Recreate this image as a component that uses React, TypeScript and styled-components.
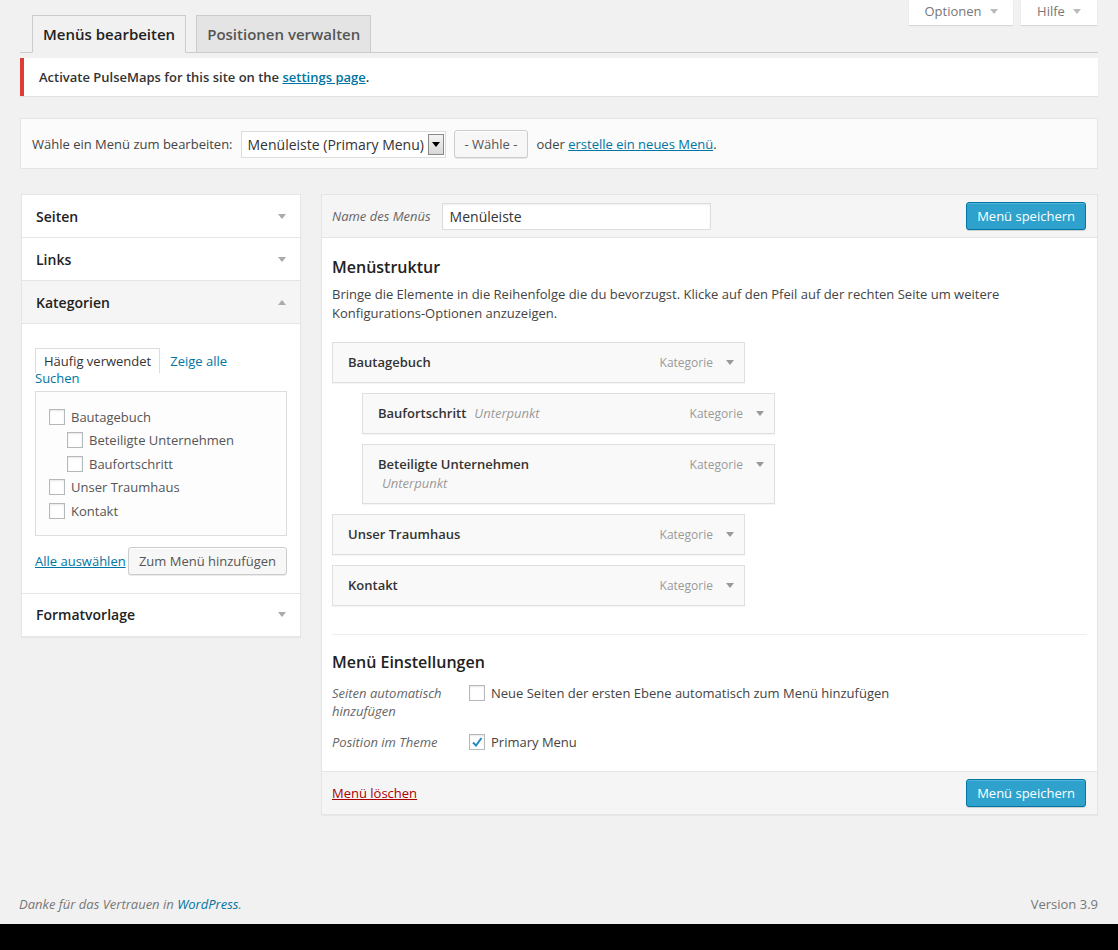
import styled, { createGlobalStyle } from "styled-components";

const GlobalStyle = createGlobalStyle`
  html, body {
    margin: 0;
    padding: 0;
    background: #f1f1f1;
  }
  body {
    font-family: "Open Sans", "Noto Sans", sans-serif;
    font-size: 13px;
    color: #444;
  }
  * {
    box-sizing: border-box;
  }
`;

const Page = styled.div`
  min-height: 950px;
  display: flex;
  flex-direction: column;
`;

const Wrap = styled.div`
  flex: 1;
  padding: 0 20px;
`;

const HeaderRow = styled.div`
  display: flex;
  align-items: flex-start;
  justify-content: space-between;
  height: 53px;
  border-bottom: 1px solid #ccc;
`;

const TabList = styled.div`
  display: flex;
  gap: 10px;
  padding-left: 12px;
  margin-top: 15px;
`;

const Tab = styled.div<{ $active?: boolean }>`
  height: 38px;
  padding: 0 10px;
  display: flex;
  align-items: center;
  font-size: 15px;
  font-weight: 600;
  border: 1px solid #ccc;
  border-bottom-color: ${(p) => (p.$active ? "#f1f1f1" : "#ccc")};
  background: ${(p) => (p.$active ? "#f1f1f1" : "#e4e4e4")};
  color: ${(p) => (p.$active ? "#222" : "#555")};
`;

const ScreenMeta = styled.div`
  display: flex;
  gap: 8px;
  margin-right: 1px;
`;

const MetaButton = styled.div<{ $width: number }>`
  width: ${(p) => p.$width}px;
  height: 25px;
  padding-bottom: 3px;
  display: flex;
  align-items: center;
  justify-content: center;
  gap: 8px;
  background: #fff;
  color: #777;
  font-size: 13px;
  box-shadow: 0 1px 1px rgba(0, 0, 0, 0.1);
`;

const Notice = styled.div`
  margin-top: 5px;
  background: #fff;
  border-left: 4px solid #dd3d36;
  box-shadow: 0 1px 1px rgba(0, 0, 0, 0.06);
  padding: 9px 15px;
  line-height: 20px;
  font-weight: 600;
  color: #333;
`;

const Link = styled.a`
  color: #0074a2;
  text-decoration: underline;
`;

const DangerLink = styled.a`
  color: #a00;
  text-decoration: underline;
`;

const ManageBox = styled.div`
  margin-top: 22px;
  background: #fbfbfb;
  border: 1px solid #e5e5e5;
  padding: 11px 11px 10px;
  display: flex;
  align-items: center;
  gap: 8px;
`;

const FakeSelect = styled.div`
  width: 205px;
  height: 27px;
  display: flex;
  align-items: center;
  justify-content: space-between;
  background: #fff;
  border: 1px solid #ddd;
  padding: 0 1px 0 6px;
  font-size: 14px;
  color: #333;
`;

const SelectArrow = styled.span`
  width: 16px;
  height: 21px;
  border: 1px solid #888;
  background: linear-gradient(#f4f4f4, #d8d8d8);
  display: flex;
  align-items: center;
  justify-content: center;
`;

const Button = styled.button<{ $primary?: boolean }>`
  height: 28px;
  padding: 0 10px;
  font-family: inherit;
  font-size: 13px;
  border-radius: 3px;
  cursor: pointer;
  border: 1px solid ${(p) => (p.$primary ? "#0074a2" : "#ccc")};
  background: ${(p) => (p.$primary ? "#2ea2cc" : "#f7f7f7")};
  color: ${(p) => (p.$primary ? "#fff" : "#555")};
  box-shadow: ${(p) =>
    p.$primary
      ? "inset 0 1px 0 rgba(120,200,230,0.5), 0 1px 0 rgba(0,0,0,0.15)"
      : "inset 0 1px 0 #fff, 0 1px 0 rgba(0,0,0,0.08)"};
`;

const Columns = styled.div`
  margin-top: 25px;
  display: grid;
  grid-template-columns: 281px 1fr;
  gap: 20px;
  align-items: start;
`;

const Accordion = styled.div`
  margin-left: 1px;
  background: #fff;
  border: 1px solid #e5e5e5;
  border-top: none;
  box-shadow: 0 1px 1px rgba(0, 0, 0, 0.04);
`;

const SectionTitle = styled.div<{ $open?: boolean }>`
  height: 43px;
  padding: 0 14px;
  display: flex;
  align-items: center;
  justify-content: space-between;
  font-size: 14px;
  font-weight: 600;
  color: #222;
  background: ${(p) => (p.$open ? "#f5f5f5" : "#fff")};
  border-top: 1px solid #e5e5e5;
`;

const SectionContent = styled.div`
  padding: 24px 13px 18px;
  border-top: 1px solid #e5e5e5;
`;

const TabsRow = styled.div`
  display: flex;
  align-items: flex-end;
  gap: 10px;
  line-height: 19px;
`;

const SmallTab = styled.span`
  padding: 3px 8px 2px;
  border: 1px solid #ddd;
  border-bottom: none;
  background: #fff;
  color: #333;
`;

const TabLink = styled.span`
  color: #0074a2;
  padding-bottom: 2px;
`;

const SearchLine = styled.div`
  color: #0074a2;
  line-height: 18px;
  margin-top: -4px;
`;

const CheckList = styled.div`
  margin-top: 4px;
  border: 1px solid #ddd;
  background: #fdfdfd;
  padding: 13px 13px 12px;
`;

const CheckItem = styled.div<{ $indent?: boolean }>`
  height: 23.5px;
  display: flex;
  align-items: center;
  gap: 6px;
  padding-left: ${(p) => (p.$indent ? 18 : 0)}px;
  color: #555;
`;

const Box = styled.span`
  width: 16px;
  height: 16px;
  flex: none;
  border: 1px solid #b4b9be;
  background: #fff;
  box-shadow: inset 0 1px 2px rgba(0, 0, 0, 0.1);
  display: flex;
  align-items: center;
  justify-content: center;
`;

const ActionsRow = styled.div`
  margin-top: 11px;
  display: flex;
  align-items: center;
  justify-content: space-between;
`;

const Panel = styled.div`
  background: #fff;
  border: 1px solid #e5e5e5;
  border-top: none;
  box-shadow: 0 1px 1px rgba(0, 0, 0, 0.04);
`;

const PanelHeader = styled.div`
  height: 44px;
  padding: 0 11px 0 10px;
  display: flex;
  align-items: center;
  background: #f5f5f5;
  border-top: 1px solid #e5e5e5;
  border-bottom: 1px solid #e5e5e5;
`;

const FieldLabel = styled.label`
  font-size: 13px;
  font-style: italic;
  color: #666;
  margin-right: 11px;
`;

const TextInput = styled.div`
  width: 269px;
  height: 27px;
  padding: 0 7px;
  display: flex;
  align-items: center;
  background: #fff;
  border: 1px solid #ddd;
  box-shadow: inset 0 1px 2px rgba(0, 0, 0, 0.07);
  font-size: 14px;
  color: #333;
`;

const Spacer = styled.div`
  flex: 1;
`;

const PanelBody = styled.div`
  padding: 18px 10px 20px;
`;

const Heading = styled.h3`
  margin: 0;
  font-size: 16px;
  font-weight: 600;
  line-height: 22px;
  color: #222;
`;

const Description = styled.p`
  margin: 7px 0 0;
  line-height: 19px;
  font-size: 13px;
  color: #444;
`;

const MenuList = styled.div`
  margin-top: 19px;
  display: flex;
  flex-direction: column;
  gap: 10px;
`;

const MenuItemBar = styled.div<{ $depth: number }>`
  width: 413px;
  margin-left: ${(p) => p.$depth * 30}px;
  padding: 10px 10px 10px 15px;
  display: flex;
  align-items: flex-start;
  background: #f9f9f9;
  border: 1px solid #dfdfdf;
  box-shadow: 0 1px 1px rgba(0, 0, 0, 0.04);
  line-height: 19px;
`;

const ItemTitle = styled.div`
  width: 220px;
  display: flex;
  flex-wrap: wrap;
  column-gap: 8px;
`;

const ItemName = styled.span`
  font-weight: 600;
  color: #333;
`;

const SubLabel = styled.span<{ $wrapped?: boolean }>`
  font-style: italic;
  color: #999;
  padding-left: ${(p) => (p.$wrapped ? 4 : 0)}px;
`;

const ItemControls = styled.div`
  margin-left: auto;
  display: flex;
  align-items: center;
  gap: 13px;
  height: 19px;
  font-size: 12px;
  color: #999;
`;

const Divider = styled.hr`
  margin: 28px 0 0;
  border: none;
  border-top: 1px solid #eee;
`;

const SettingsHeading = styled(Heading)`
  margin-top: 16px;
`;

const SettingsRow = styled.div<{ $first?: boolean }>`
  margin-top: ${(p) => (p.$first ? 11 : 13)}px;
  display: grid;
  grid-template-columns: 137px 1fr;
`;

const SettingsLabel = styled.div`
  font-size: 13px;
  font-style: italic;
  line-height: 18px;
  color: #666;
`;

const SettingsField = styled.div`
  display: flex;
  align-items: center;
  gap: 6px;
  height: 18px;
  color: #444;
`;

const PanelFooter = styled.div`
  height: 43px;
  padding: 0 11px 0 10px;
  display: flex;
  align-items: center;
  justify-content: space-between;
  background: #f5f5f5;
  border-top: 1px solid #e5e5e5;
`;

const Footer = styled.div`
  padding: 0 20px 0 19px;
  height: 30px;
  display: flex;
  align-items: center;
  justify-content: space-between;
  color: #777;
  margin-bottom: 5px;
`;

const FooterCredit = styled.span`
  font-style: italic;
  font-size: 13px;
  a {
    color: #0074a2;
    text-decoration: none;
  }
`;

const BlackBar = styled.div`
  height: 26px;
  background: #000;
`;

function Triangle({ up, color = "#aaa" }: { up?: boolean; color?: string }) {
  return (
    <svg width="8" height="5" viewBox="0 0 8 5">
      <path d={up ? "M0 5 L4 0 L8 5 Z" : "M0 0 L8 0 L4 5 Z"} fill={color} />
    </svg>
  );
}

function Check({ checked }: { checked?: boolean }) {
  return (
    <Box>
      {checked && (
        <svg width="12" height="12" viewBox="0 0 12 12">
          <path
            d="M2 6.5 L5 9.5 L10.5 2"
            fill="none"
            stroke="#1e8cbe"
            strokeWidth="2"
          />
        </svg>
      )}
    </Box>
  );
}

const categories = [
  { name: "Bautagebuch" },
  { name: "Beteiligte Unternehmen", indent: true },
  { name: "Baufortschritt", indent: true },
  { name: "Unser Traumhaus" },
  { name: "Kontakt" },
];

const menuItems = [
  { name: "Bautagebuch", depth: 0 },
  { name: "Baufortschritt", depth: 1 },
  { name: "Beteiligte Unternehmen", depth: 1 },
  { name: "Unser Traumhaus", depth: 0 },
  { name: "Kontakt", depth: 0 },
];

export default function App() {
  return (
    <Page>
      <GlobalStyle />
      <Wrap>
        <HeaderRow>
          <TabList>
            <Tab $active>Menüs bearbeiten</Tab>
            <Tab>Positionen verwalten</Tab>
          </TabList>
          <ScreenMeta>
            <MetaButton $width={104}>
              Optionen <Triangle color="#bbb" />
            </MetaButton>
            <MetaButton $width={76}>
              Hilfe <Triangle color="#bbb" />
            </MetaButton>
          </ScreenMeta>
        </HeaderRow>

        <Notice>
          Activate PulseMaps for this site on the <Link>settings page</Link>.
        </Notice>

        <ManageBox>
          <span>Wähle ein Menü zum bearbeiten:</span>
          <FakeSelect>
            Menüleiste (Primary Menu)
            <SelectArrow>
              <Triangle color="#000" />
            </SelectArrow>
          </FakeSelect>
          <Button>- Wähle -</Button>
          <span>
            oder <Link>erstelle ein neues Menü</Link>.
          </span>
        </ManageBox>

        <Columns>
          <Accordion>
            <SectionTitle>
              Seiten <Triangle />
            </SectionTitle>
            <SectionTitle>
              Links <Triangle />
            </SectionTitle>
            <SectionTitle $open>
              Kategorien <Triangle up />
            </SectionTitle>
            <SectionContent>
              <TabsRow>
                <SmallTab>Häufig verwendet</SmallTab>
                <TabLink>Zeige alle</TabLink>
              </TabsRow>
              <SearchLine>Suchen</SearchLine>
              <CheckList>
                {categories.map((c) => (
                  <CheckItem key={c.name} $indent={c.indent}>
                    <Check />
                    {c.name}
                  </CheckItem>
                ))}
              </CheckList>
              <ActionsRow>
                <Link>Alle auswählen</Link>
                <Button>Zum Menü hinzufügen</Button>
              </ActionsRow>
            </SectionContent>
            <SectionTitle>
              Formatvorlage <Triangle />
            </SectionTitle>
          </Accordion>

          <Panel>
            <PanelHeader>
              <FieldLabel>Name des Menüs</FieldLabel>
              <TextInput>Menüleiste</TextInput>
              <Spacer />
              <Button $primary>Menü speichern</Button>
            </PanelHeader>
            <PanelBody>
              <Heading>Menüstruktur</Heading>
              <Description>
                Bringe die Elemente in die Reihenfolge die du bevorzugst. Klicke
                auf den Pfeil auf der rechten Seite um weitere
                Konfigurations-Optionen anzuzeigen.
              </Description>
              <MenuList>
                {menuItems.map((m) => (
                  <MenuItemBar key={m.name} $depth={m.depth}>
                    <ItemTitle>
                      <ItemName>{m.name}</ItemName>
                      {m.depth > 0 && (
                        <SubLabel $wrapped={m.name.length > 16}>
                          Unterpunkt
                        </SubLabel>
                      )}
                    </ItemTitle>
                    <ItemControls>
                      Kategorie
                      <Triangle color="#999" />
                    </ItemControls>
                  </MenuItemBar>
                ))}
              </MenuList>
              <Divider />
              <SettingsHeading>Menü Einstellungen</SettingsHeading>
              <SettingsRow $first>
                <SettingsLabel>
                  Seiten automatisch
                  <br />
                  hinzufügen
                </SettingsLabel>
                <SettingsField>
                  <Check />
                  Neue Seiten der ersten Ebene automatisch zum Menü hinzufügen
                </SettingsField>
              </SettingsRow>
              <SettingsRow>
                <SettingsLabel>Position im Theme</SettingsLabel>
                <SettingsField>
                  <Check checked />
                  Primary Menu
                </SettingsField>
              </SettingsRow>
            </PanelBody>
            <PanelFooter>
              <DangerLink>Menü löschen</DangerLink>
              <Button $primary>Menü speichern</Button>
            </PanelFooter>
          </Panel>
        </Columns>
      </Wrap>
      <Footer>
        <FooterCredit>
          Danke für das Vertrauen in <a>WordPress</a>.
        </FooterCredit>
        <span>Version 3.9</span>
      </Footer>
      <BlackBar />
    </Page>
  );
}
